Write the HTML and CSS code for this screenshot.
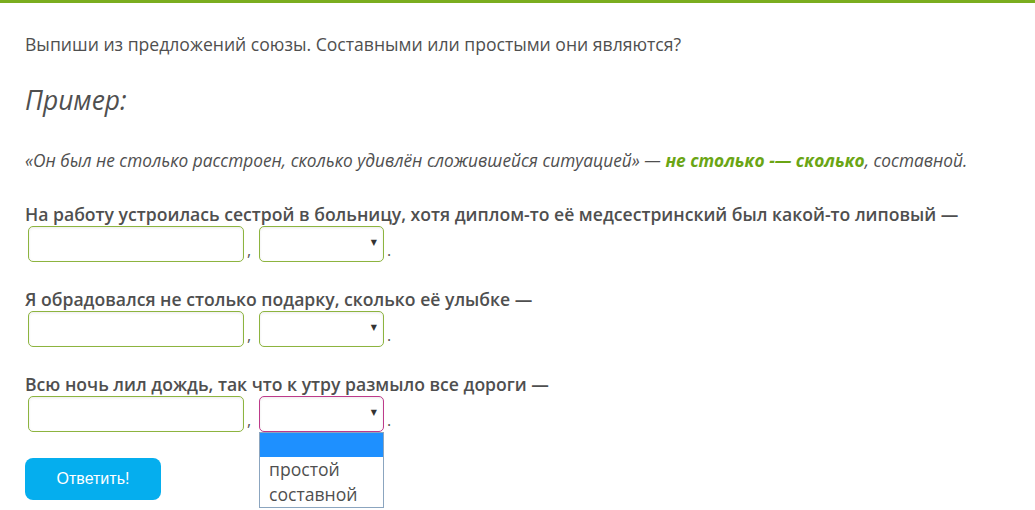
FILE: index.html
```html
<!DOCTYPE html>
<html lang="ru">
<head>
<meta charset="utf-8">
<link rel="stylesheet" href="styles.css">
</head>
<body>
<div class="topbar"></div>
<main class="task">
  <p class="intro">Выпиши из предложений союзы. Составными или простыми они являются?</p>
  <h2 class="example-title">Пример:</h2>
  <p class="example">«Он был не столько расстроен, сколько удивлён сложившейся ситуацией» — <b class="hl">не столько -— сколько</b>, составной.</p>

  <div class="question">
    <p class="q-text">На работу устроилась сестрой в больницу, хотя диплом-то её медсестринский был какой-то липовый —</p>
    <div class="answer-row">
      <span class="field"></span><span class="sep">,</span>
      <span class="select"><span class="arrow">▼</span></span><span class="sep">.</span>
    </div>
  </div>

  <div class="question">
    <p class="q-text">Я обрадовался не столько подарку, сколько её улыбке —</p>
    <div class="answer-row">
      <span class="field"></span><span class="sep">,</span>
      <span class="select"><span class="arrow">▼</span></span><span class="sep">.</span>
    </div>
  </div>

  <div class="question">
    <p class="q-text">Всю ночь лил дождь, так что к утру размыло все дороги —</p>
    <div class="answer-row">
      <span class="field"></span><span class="sep">,</span>
      <span class="select select-open"><span class="arrow">▼</span>
        <span class="dropdown">
          <span class="opt opt-active"></span>
          <span class="opt">простой</span>
          <span class="opt">составной</span>
        </span>
      </span><span class="sep">.</span>
    </div>
  </div>

  <button class="submit">Ответить!</button>
</main>
</body>
</html>
```

FILE: styles.css
```css
html, body {
  margin: 0;
  padding: 0;
  background: #ffffff;
}
body {
  min-height: 510px;
  font-family: "Open Sans", "Liberation Sans", sans-serif;
  color: #4f4f4f;
  font-size: 17.6px;
}
.topbar {
  height: 3px;
  background: #7aad1f;
}
.task {
  padding: 29px 0 0 25px;
}
.intro {
  margin: 0;
  line-height: 24px;
}
.example-title {
  margin: 28px 0 0;
  font-size: 26.4px;
  font-style: italic;
  font-weight: 400;
  line-height: 32px;
}
.example {
  margin: 33px 0 0;
  font-size: 17.3px;
  font-style: italic;
  line-height: 24px;
}
.hl {
  color: #6aa514;
  font-weight: 700;
}
.question {
  margin-top: 29px;
}
.question + .question {
  margin-top: 25px;
}
.q-text {
  margin: 0;
  font-weight: 600;
  line-height: 24px;
}
.answer-row {
  display: flex;
  align-items: flex-end;
  margin-left: 3px;
  height: 36px;
}
.field {
  box-sizing: border-box;
  width: 216px;
  height: 36px;
  border: 1px solid #8db43f;
  border-radius: 5px;
  box-shadow: inset 0 1px 3px rgba(0,0,0,0.08);
}
.sep {
  width: 15px;
  padding-left: 3px;
  box-sizing: border-box;
  font-size: 16px;
  line-height: 24px;
  color: #555;
}
.select {
  position: relative;
  box-sizing: border-box;
  width: 125px;
  height: 36px;
  border: 1px solid #8db43f;
  border-radius: 5px;
  box-shadow: inset 0 1px 3px rgba(0,0,0,0.08);
}
.select-open {
  border-color: #bd3a8a;
}
.arrow {
  position: absolute;
  right: 6px;
  top: 11px;
  font-size: 8px;
  color: #333;
  font-family: "DejaVu Sans", sans-serif;
}
.dropdown {
  position: absolute;
  left: -1px;
  top: 35px;
  width: 125px;
  box-sizing: border-box;
  border: 1px solid #8ba5bf;
  background: #fff;
  display: flex;
  flex-direction: column;
  z-index: 2;
}
.opt {
  height: 25px;
  line-height: 25px;
  padding-left: 9px;
  font-size: 17.6px;
  color: #4f4f4f;
}
.opt-active {
  height: 24px;
  background: #1e90ff;
}
.submit {
  margin-top: 26px;
  width: 136px;
  height: 42px;
  border: none;
  border-radius: 8px;
  background: #05aeee;
  color: #fff;
  font-family: "Liberation Sans", Arial, sans-serif;
  font-weight: 400;
  font-size: 16px;
}
```
